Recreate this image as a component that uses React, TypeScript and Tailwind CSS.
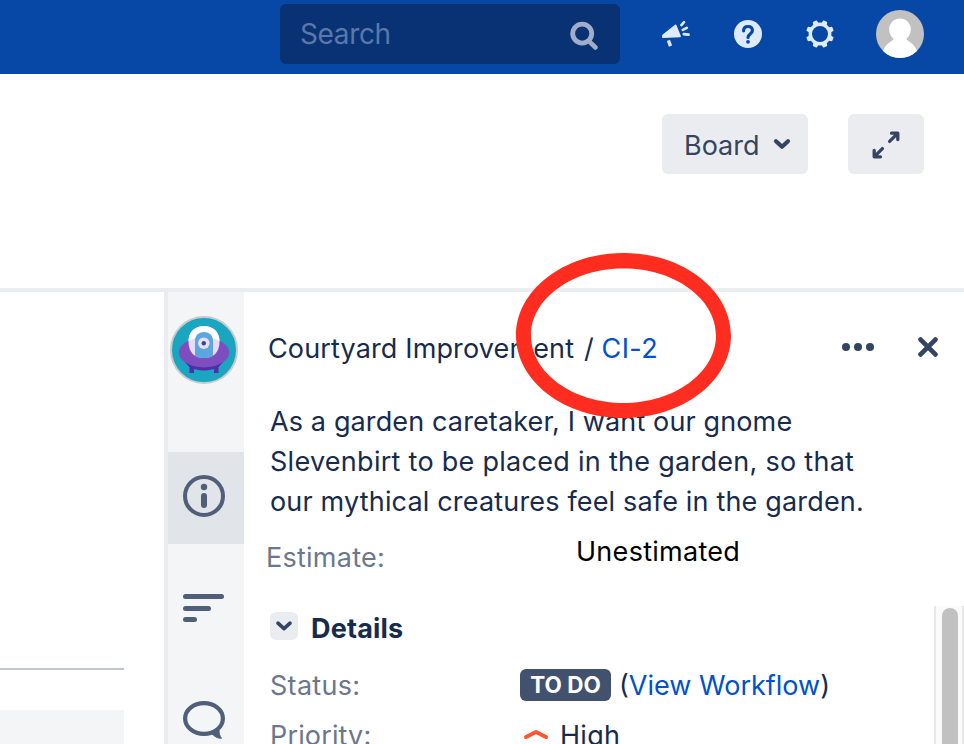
import React from "react";

function SearchIcon() {
  return (
    <svg width="30" height="30" viewBox="0 0 30 30" fill="none" stroke="#a0aeca" strokeLinecap="round">
      <circle cx="12.2" cy="12.6" r="9.5" strokeWidth="4.8" />
      <path d="M20.2 21.3l5.3 5.2" strokeWidth="4.6" />
    </svg>
  );
}

function MegaphoneIcon() {
  return (
    <svg width="28" height="28" viewBox="0 0 28 28" fill="#deebff" stroke="#deebff" strokeLinecap="round" strokeLinejoin="round">
      <path d="M13.6 5.400L1 15.400v1.800l17-.8z" strokeWidth="1.800" />
      <path d="M6.400 20.400l2.100 5.700" strokeWidth="3.400" strokeLinecap="butt" />
      <path d="M19.400 5.100l2.600-2.900M20.800 9.800l4-2M21.800 14.100l4.800.5" strokeWidth="2.600" />
    </svg>
  );
}

function HelpIcon() {
  return (
    <svg width="28" height="28" viewBox="0 0 28 28" fill="none">
      <circle cx="14" cy="14" r="14" fill="#deebff" />
      <path d="M9.600 10.800C9.600 8 11.300 6.500 14 6.500s4.400 1.600 4.400 4c0 3.500-4.400 3.500-4.400 6.900" stroke="#0747a6" strokeWidth="3.200" strokeLinecap="round" />
      <circle cx="14" cy="21.800" r="1.900" fill="#0747a6" />
    </svg>
  );
}

function GearIcon() {
  return (
    <svg width="28" height="28" viewBox="-14 -14 28 28" fill="none" stroke="#deebff">
      <circle r="9.700" strokeWidth="3.400" />
      {[22.5, 67.5, 112.5, 157.5, 202.5, 247.5, 292.5, 337.5].map((angle) => (
        <path key={angle} transform={`rotate(${angle})`} d="M-2 -10.8L-1.5 -13.2H1.5L2 -10.8Z" fill="#deebff" strokeWidth="1.5" strokeLinejoin="round" />
      ))}
    </svg>
  );
}

function UserAvatar() {
  return (
    <svg width="48" height="48" viewBox="0 0 48 48">
      <defs>
        <clipPath id="user-avatar">
          <circle cx="24" cy="24" r="24" />
        </clipPath>
      </defs>
      <g clipPath="url(#user-avatar)">
        <path fill="#c1c1c1" d="M0 0h48v48H0z" />
        <path fill="#fff" d="M24 8.500c6 0 10.800 4.600 10.800 10.800 0 4.400-2 7.700-4.600 9.700 1.200 2.200 9.500 4.400 11.500 14.500V49H6.300v-5.500C8.300 33.400 16.600 31.200 17.800 29c-2.600-2-4.600-5.300-4.600-9.700C13.200 13.100 18 8.500 24 8.500z" />
      </g>
    </svg>
  );
}

function ChevronDown({ size }: { size: "md" | "sm" }) {
  return size === "md" ? (
    <svg width="18" height="14" viewBox="0 0 18 14" fill="none" stroke="#344563" strokeWidth="4.200" strokeLinecap="round" strokeLinejoin="round">
      <path d="M3 4.200l6 5.500 6-5.500" />
    </svg>
  ) : (
    <svg width="18" height="14" viewBox="0 0 18 14" fill="none" stroke="#344563" strokeWidth="3.600" strokeLinecap="round" strokeLinejoin="round">
      <path d="M3 4.200l6 5.400 6-5.400" />
    </svg>
  );
}

function ExpandIcon() {
  return (
    <svg width="28" height="28" viewBox="0 0 28 28" fill="none" stroke="#344563" strokeWidth="3.300" strokeLinecap="round" strokeLinejoin="round">
      <path d="M17.600 10.400l8-8M19.500 2.200h6.300v6.300M10.400 17.600l-8 8M2.200 19.500v6.300h6.300" />
    </svg>
  );
}

function ProjectAvatar() {
  return (
    <svg width="68" height="68" viewBox="0 0 68 68">
      <circle cx="34" cy="34" r="33" fill="#1aa5c0" stroke="#c7c9cb" strokeWidth="2" />
      <path d="M19.500 46h4.500v11h-4.500zM44 46h4.500v11H44z" fill="#512da8" />
      <path d="M14 44h40c-3 7-10 10.500-20 10.500S17 51 14 44z" fill="#512da8" />
      <ellipse cx="34" cy="36.500" rx="25.200" ry="15" fill="#7e4dc0" />
      <path d="M18.500 25.500C18.500 16 25 10 34 10s15.500 6 15.500 15.500c0 10-5 16.500-15.500 16.500S18.500 35.500 18.500 25.500z" fill="#e6dcf3" />
      <path d="M18.500 25V24C19 15.500 25.500 10 34 10s15 5.500 15.500 14v1c-2-1.200-4-2-7-2.500H25.500c-3 .5-5 1.300-7 2.500z" fill="#fff" />
      <path d="M25 25c0-5.500 3.500-9 9-9s9 3.500 9 9v15c-2.500 1.400-5.500 2-9 2s-6.500-.6-9-2z" fill="#5ca5df" />
      <circle cx="33.800" cy="27.200" r="5.800" fill="#e6def3" />
      <circle cx="33.800" cy="27.200" r="2.200" fill="#344b93" />
    </svg>
  );
}

function InfoIcon() {
  return (
    <svg width="42" height="42" viewBox="0 0 42 42" fill="none" stroke="#505f79">
      <circle cx="21" cy="21" r="19" strokeWidth="4" />
      <circle cx="21" cy="12" r="3.200" fill="#505f79" stroke="none" />
      <path d="M21 21v9" strokeWidth="6" strokeLinecap="round" />
    </svg>
  );
}

function CommentIcon() {
  return (
    <svg width="42" height="38" viewBox="0 0 42 38" fill="none" stroke="#505f79">
      <ellipse cx="21" cy="17.500" rx="18.900" ry="15.400" strokeWidth="4.200" />
      <path d="M29 33c4 3.800 7 4.500 9.500 4.200-1.800-2.200-2.500-5-2.500-8.200z" fill="#505f79" strokeWidth="1" strokeLinejoin="round" />
    </svg>
  );
}

function TopBar() {
  return (
    <header className="flex h-[74px] shrink-0 items-start bg-[#0747a6] pt-1 pl-[280px]">
      <div className="flex h-[60px] w-[340px] items-center justify-between rounded-md bg-[#093274] pr-5 pl-5 text-[28px] tracking-[-0.35px] text-[#5a78a8]">
        <span>Search</span>
        <span className="mt-1"><SearchIcon /></span>
      </div>
      <nav className="flex h-[60px] items-center pl-[42px]">
        <MegaphoneIcon />
        <span className="ml-11"><HelpIcon /></span>
        <span className="ml-11"><GearIcon /></span>
        <span className="ml-[42px]"><UserAvatar /></span>
      </nav>
    </header>
  );
}

function BoardToolbar() {
  return (
    <div className="flex h-[218px] shrink-0 items-start justify-end gap-10 border-b-4 border-[#ebecf0] pt-10 pr-10 text-[#344563]">
      <button className="flex h-[60px] w-[146px] items-center rounded-md bg-[#ebecf0] pl-[22px] text-[27px]">
        <span className="w-[89px] pt-1 text-left">Board</span>
        <ChevronDown size="md" />
      </button>
      <button className="flex h-[60px] w-[76px] items-center justify-center rounded-md bg-[#ebecf0] pt-0.5">
        <ExpandIcon />
      </button>
    </div>
  );
}

function BoardColumn() {
  return (
    <section className="w-[164px] shrink-0 pt-[376px]">
      <div className="h-0.5 w-[124px] bg-[#c1c4d1]" />
      <div className="mt-10 h-[34px] w-[124px] bg-[#f4f5f7]" />
    </section>
  );
}

function DetailTabs() {
  return (
    <aside className="flex w-20 shrink-0 flex-col items-center border-l-4 border-[#ebecf0] bg-[#f4f5f7]">
      <div className="mt-6 mr-1 h-[68px]"><ProjectAvatar /></div>
      <div className="mt-[68px] flex h-[92px] w-full items-center bg-[#e1e4e9] pb-1 pl-[15px]"><InfoIcon /></div>
      <div className="mt-[50px] ml-[15px] flex w-[42px] flex-col gap-[6.500px] self-start">
        <div className="h-[5px] w-[41px] rounded-full bg-[#505f79]" />
        <div className="h-[5px] w-7 rounded-full bg-[#505f79]" />
        <div className="h-[5px] w-3.5 rounded-full bg-[#505f79]" />
      </div>
      <div className="mt-[79px] ml-[15px] self-start"><CommentIcon /></div>
    </aside>
  );
}

function IssueDetail() {
  return (
    <article className="flex min-w-0 flex-1 flex-col text-[27px] whitespace-nowrap text-[#172b4d]">
      <div className="flex h-[110px] shrink-0 items-center justify-between pt-1 pr-[26px] pl-6">
        <div className="tracking-[0.14px]">
          Courtyard Improvement <span className="ml-0.5">/</span> <a className="tracking-[0.400px] text-[#0052cc]">CI-2</a>
        </div>
        <div className="flex items-center gap-11 pb-1">
          <div className="flex gap-1">
            <i className="size-2 rounded-full bg-[#344563]" />
            <i className="size-2 rounded-full bg-[#344563]" />
            <i className="size-2 rounded-full bg-[#344563]" />
          </div>
          <svg width="20" height="20" viewBox="0 0 20 20" stroke="#344563" strokeWidth="4.800" strokeLinecap="round">
            <path d="M2.600 2.600l14.800 14.800M17.400 2.600L2.600 17.400" />
          </svg>
        </div>
      </div>
      <div className="h-[120px] shrink-0 pl-[26px] leading-[40px]">
        <p className="tracking-[0.13px]">As a garden caretaker, I want our gnome</p>
        <p className="tracking-[0.28px]">Slevenbirt to be placed in the garden, so that</p>
        <p className="tracking-[0.17px]">our mythical creatures feel safe in the garden.</p>
      </div>
      <div className="flex h-[84px] shrink-0 pl-[22px] leading-[72px]">
        <span className="w-[310px] tracking-[0.25px] text-[#6b778c]">Estimate:</span>
        <span className="leading-[60px] tracking-[0.28px] text-black">Unestimated</span>
      </div>
      <div className="flex min-h-0 flex-1">
        <div className="flex-1 overflow-hidden pl-[26px]">
          <div className="flex h-11 items-center">
            <span className="mb-1 flex size-7 items-center justify-center rounded-md bg-[#ebecf0]"><ChevronDown size="sm" /></span>
            <h2 className="mt-0.5 ml-[13px] font-bold tracking-[0.2px]">Details</h2>
          </div>
          <dl className="mt-[11px] grid grid-cols-[250px_1fr] leading-[50px]">
            <dt className="tracking-[0.300px] text-[#6b778c]">Status:</dt>
            <dd className="flex items-center">
              <span className="mr-2 mb-0.5 h-8 w-[91px] rounded-md bg-[#42526e] text-center text-[22.500px] leading-[32px] font-bold text-white">TO DO</span>
              <span>(<a className="text-[#0052cc]">View Workflow</a>)</span>
            </dd>
            <dt className="tracking-[0.150px] text-[#6b778c]">Priority:</dt>
            <dd className="flex items-center">
              <svg className="mb-1 ml-[3px]" width="26" height="12" viewBox="0 0 26 12" fill="none" stroke="#ff5630" strokeWidth="4" strokeLinecap="round" strokeLinejoin="round">
                <path d="M3 9l10-5 10 5" />
              </svg>
              <span className="ml-[11px] tracking-[0.300px]">High</span>
            </dd>
          </dl>
        </div>
        <div className="flex w-[30px] justify-center border-x-2 border-x-[#e8e8e8] bg-[#fafafa] pt-0.5 pl-0.5">
          <div className="h-[160px] w-4 rounded-full bg-[#c1c1c1]" />
        </div>
      </div>
    </article>
  );
}

export default function App() {
  return (
    <div className="relative flex h-[744px] w-[964px] flex-col overflow-hidden bg-white font-['Inter','Liberation_Sans',sans-serif]">
      <TopBar />
      <BoardToolbar />
      <main className="flex min-h-0 flex-1 overflow-hidden">
        <BoardColumn />
        <DetailTabs />
        <IssueDetail />
      </main>
      <svg className="absolute top-[252px] left-[515px]" width="218" height="168" viewBox="0 0 218 168" fill="none">
        <path
          fillRule="evenodd"
          fill="#ff2d20"
          d="M108.500 1C168 1 216 38 216 83.500S168 166 108.500 166 1 129 1 83.500 49 1 108.500 1zm0 15.500C57.500 16.500 16 46.500 16 83.500S57.500 151 108.500 151 201 120.500 201 83.500 159.500 16.500 108.500 16.500z"
        />
      </svg>
    </div>
  );
}
